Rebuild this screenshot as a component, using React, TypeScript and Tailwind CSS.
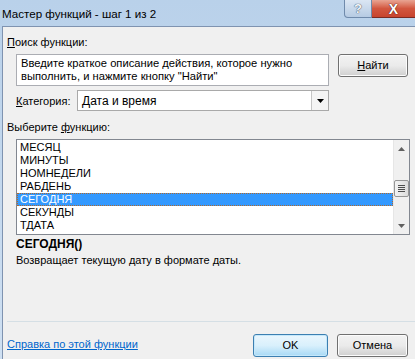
import React from 'react';

const functions = ['МЕСЯЦ', 'МИНУТЫ', 'НОМНЕДЕЛИ', 'РАБДЕНЬ', 'СЕГОДНЯ', 'СЕКУНДЫ', 'ТДАТА'];

function WinButton({ children, primary = false, className = '' }: { children: React.ReactNode; primary?: boolean; className?: string }) {
  return (
    <div
      className={`h-[23px] rounded-[3px] border flex items-center justify-center text-[11px] text-black ${
        primary
          ? 'border-[#3c7fb1] bg-gradient-to-b from-[#eaf6fd] via-[#d9f0fc] to-[#a7d9f5] shadow-[inset_0_0_0_1px_#c5e8fb]'
          : 'border-[#707070] bg-gradient-to-b from-[#f2f2f2] via-[#ebebeb] to-[#cfcfcf] shadow-[inset_0_0_0_1px_#fcfcfc]'
      } ${className}`}
    >
      {children}
    </div>
  );
}

export default function App() {
  return (
    <div
      className="w-[415px] h-[359px] overflow-hidden flex flex-col bg-gradient-to-b from-[#b9d1ea] to-[#cfe0f2]"
      style={{ fontFamily: '"Liberation Sans", Arial, sans-serif' }}
    >
      {/* TITLE BAR */}
      <div className="h-[26px] flex shrink-0">
        <div className="pl-[2px] pt-[5px] text-[11.6px] text-black">Мастер функций - шаг 1 из 2</div>
        <div className="ml-auto flex h-[18px]">
          <div className="w-[28px] border border-[#6f8aab] border-t-0 rounded-bl-[4px] bg-gradient-to-b from-[#dbe6f3] to-[#b6cbe3] flex items-center justify-center">
            <span className="text-[13px] font-bold text-[#f4f7fb] leading-none" style={{ textShadow: '0 0 1px #3d4d63, 0 0 1px #3d4d63' }}>?</span>
          </div>
          <div className="w-[43px] border-b border-[#7a2a22] bg-gradient-to-b from-[#e8a493] via-[#d2563f] to-[#c7442e] flex items-center justify-center">
            <span className="text-[14px] font-bold text-white leading-none" style={{ textShadow: '0 0 1px #4a1510, 0 0 1px #4a1510' }}>X</span>
          </div>
        </div>
      </div>

      {/* CLIENT AREA */}
      <div className="ml-[2px] flex-1 min-h-0 border-l border-t border-[#7f93b0] bg-[#f0f0f0] text-[11px] text-black flex flex-col">
        <div className="pl-[4px] pt-[9px] leading-[13px]"><span className="underline">П</span>оиск функции:</div>

        <div className="flex items-start mt-[5px] pl-[13px]">
          <div className="w-[313px] h-[32px] border border-[#abadb3] bg-white pl-[4px] pt-[2px] leading-[13px] text-[11.2px]">
            Введите краткое описание действия, которое нужно<br />выполнить, и нажмите кнопку "Найти"
          </div>
          <WinButton className="w-[70px] ml-[9px] h-[22px]"><span><span className="underline">Н</span>айти</span></WinButton>
        </div>

        <div className="flex items-center mt-[4px] pl-[13px]">
          <div className="w-[61px] pt-[2px]"><span className="underline">К</span>атегория:</div>
          <div className="w-[252px] h-[21px] border border-[#a9a9a9] bg-white flex items-center">
            <div className="flex-1 pl-[4px] text-[12px]">Дата и время</div>
            <div className="w-[17px] h-[19px] border-l border-[#c5c5c5] bg-[#f4f4f4] flex items-center justify-center">
              <svg width="7" height="4" viewBox="0 0 7 4"><path d="M0 0h7L3.5 4z" fill="#000" /></svg>
            </div>
          </div>
        </div>

        <div className="pl-[4px] mt-[10px] leading-[13px]">Выберите <span className="underline">ф</span>ункцию:</div>

        <div className="ml-[13px] mt-[5px] w-[394px] h-[96px] shrink-0 border border-[#828790] bg-white flex">
          <div className="flex-1 pt-[1px]">
            {functions.map((f) => (
              <div
                key={f}
                className={`h-[13px] leading-[13px] pl-[3px] ${
                  f === 'СЕГОДНЯ' ? 'bg-[#3399ff] text-white outline-1 outline-dotted outline-[#b0692d] -outline-offset-1' : ''
                }`}
              >
                {f}
              </div>
            ))}
          </div>
          <div className="w-[16px] bg-[#f0f0f0] border-l border-[#e6e6e6] flex flex-col items-center">
            <div className="h-[17px] flex items-center justify-center">
              <svg width="7" height="4" viewBox="0 0 7 4"><path d="M3.5 0L7 4H0z" fill="#606060" /></svg>
            </div>
            <div className="flex-1 w-full flex flex-col justify-end pb-[20px]">
              <div className="h-[17px] w-full border border-[#959595] rounded-[2px] bg-gradient-to-r from-[#f3f3f3] to-[#dcdcdc] flex flex-col items-center justify-center gap-[1px]">
                <div className="w-[7px] h-[1px] bg-[#4d4d4d]" />
                <div className="w-[7px] h-[1px] bg-[#4d4d4d]" />
                <div className="w-[7px] h-[1px] bg-[#4d4d4d]" />
                <div className="w-[7px] h-[1px] bg-[#4d4d4d]" />
              </div>
            </div>
            <div className="h-[17px] flex items-center justify-center">
              <svg width="7" height="4" viewBox="0 0 7 4"><path d="M0 0h7L3.5 4z" fill="#606060" /></svg>
            </div>
          </div>
        </div>

        <div className="pl-[13px] mt-[2px] font-bold text-[12px] leading-[14px]">СЕГОДНЯ()</div>
        <div className="pl-[13px] mt-[3px] leading-[13px]">Возвращает текущую дату в формате даты.</div>

        <div className="flex-1" />
        <div className="ml-[4px] h-[1px] shrink-0 bg-[#d5dfe5]" />
        <div className="flex items-start pl-[4px] pt-[12px] pb-[2px] shrink-0">
          <span className="text-[#0066cc] underline leading-[13px] mt-[4px]">Справка по этой функции</span>
          <WinButton primary className="w-[75px] ml-auto">OK</WinButton>
          <WinButton className="w-[71px] ml-[9px] mr-[7px]">Отмена</WinButton>
        </div>
      </div>
    </div>
  );
}
